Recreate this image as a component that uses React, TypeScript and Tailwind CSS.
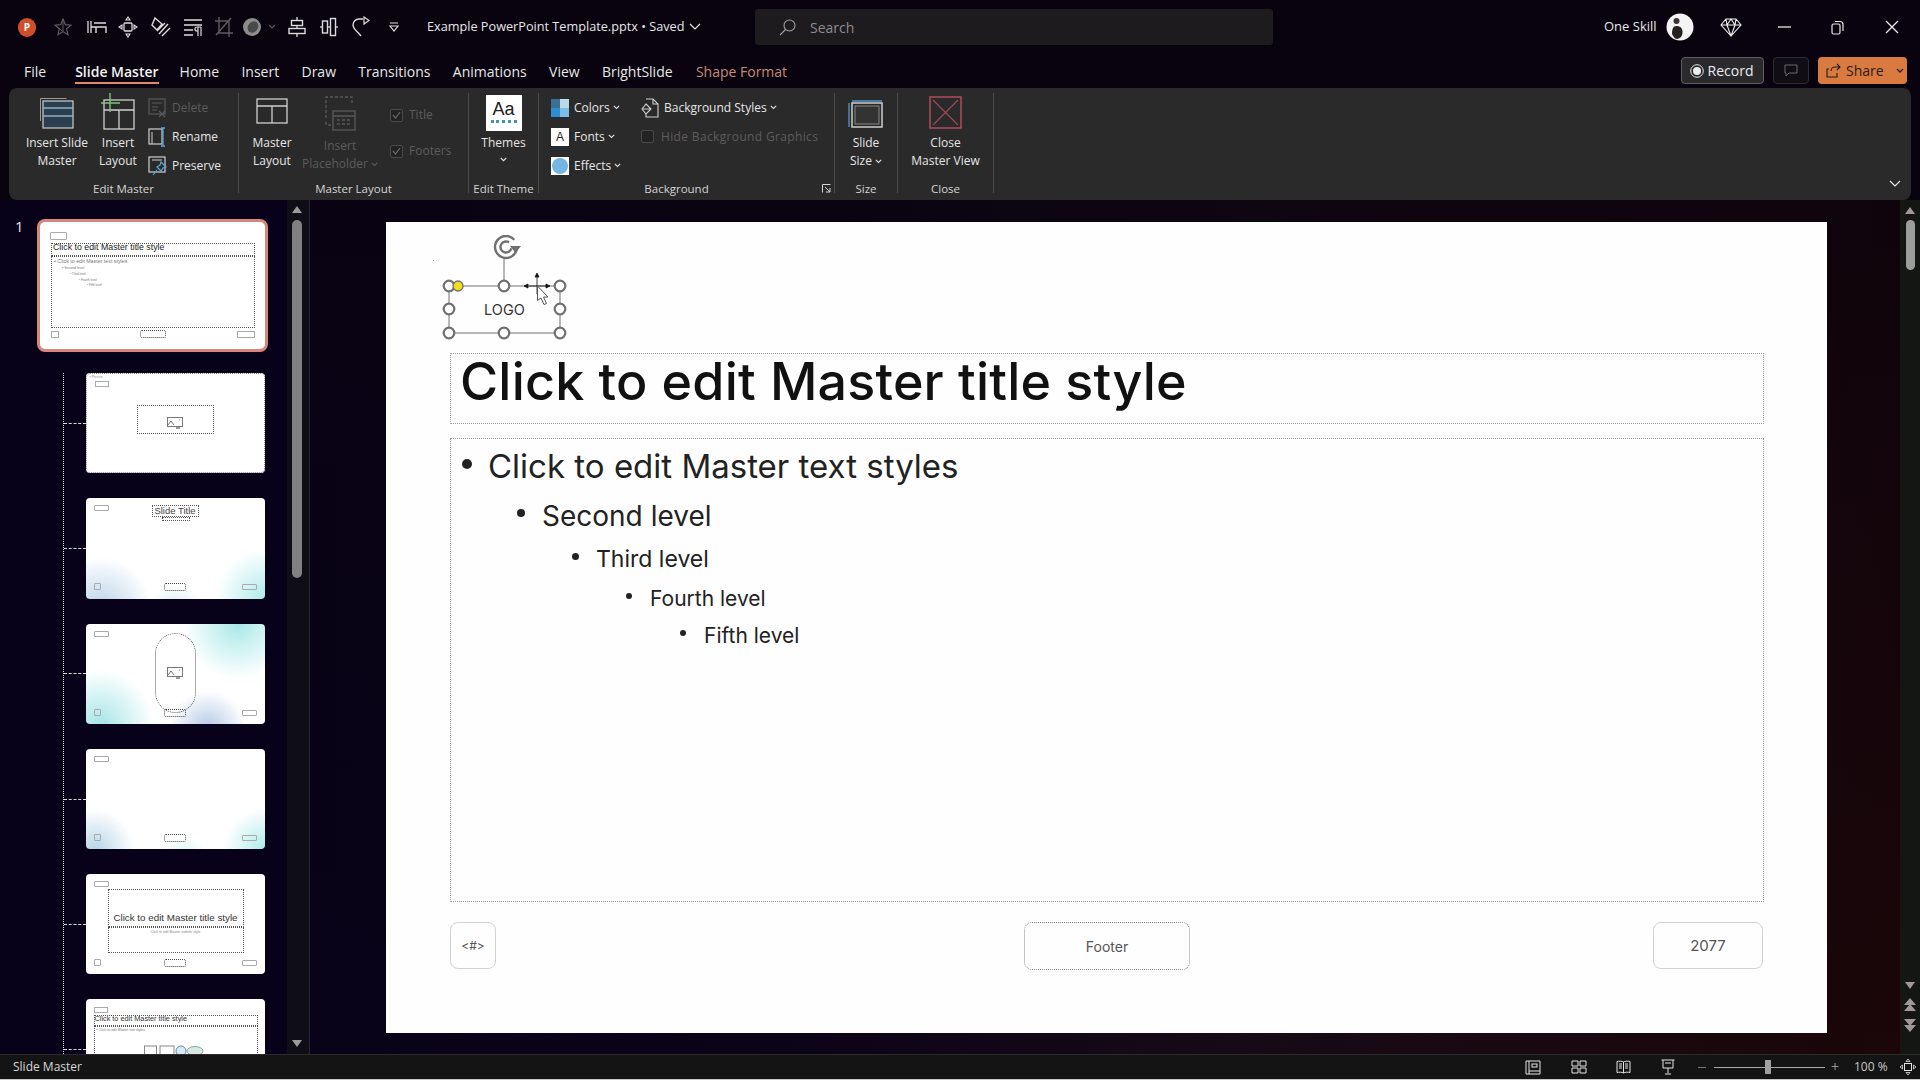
import type { ReactNode } from 'react'

const UI = "font-['Open_Sans','Liberation_Sans',sans-serif]"
const SLIDE_FONT = "font-['Inter','Liberation_Sans',sans-serif]"
const THUMB_FONT = "font-['Liberation_Sans',sans-serif]"

function Svg({ w, h, children, className = '' }: { w: number; h: number; children: ReactNode; className?: string }) {
  return (
    <svg width={w} height={h} viewBox={`0 0 ${w} ${h}`} fill="none" className={`shrink-0 ${className}`}>
      {children}
    </svg>
  )
}

// quick access toolbar
function QatIcons() {
  const c = '#dcdcdc'
  return (
    <div className="flex items-center">
      <Svg w={20} h={20} className="ml-[17px]">
        <path d="M10 2l2.300 5.600 5.700.5-4.400 3.700 1.400 6L10 14.600 4.900 17.800l1.400-6L2 8.100l5.700-.5z" stroke="#5d5a5f" strokeWidth="1.200" />
        <path d="M10 2v12.500M2 8.100l8 6.500" stroke="#5d5a5f" />
      </Svg>
      <Svg w={22} h={20} className="ml-[13px]">
        <path d="M2 4v12M5 4v12" stroke={c} strokeWidth="1.300" />
        <path d="M8 6h12M5 10h15v6M10 10v6" stroke={c} strokeWidth="1.400" />
      </Svg>
      <Svg w={20} h={22} className="ml-[10px]">
        <rect x="6" y="7" width="8" height="8" rx="1" stroke={c} strokeWidth="1.300" />
        <path d="M10 1l2 3H8zM10 21l2-3H8zM1 11l3-2v4zM19 11l-3-2v4z" stroke={c} strokeWidth="1.100" />
      </Svg>
      <Svg w={22} h={22} className="ml-[12px]">
        <path d="M5 2l7 6-5 6-5-5zM7 15l8-8M9 18l9-10M12 20l8-8" stroke={c} strokeWidth="1.400" />
      </Svg>
      <Svg w={20} h={20} className="ml-[11px]">
        <path d="M1 3h18M1 8h18M1 13h9M1 18h9" stroke={c} strokeWidth="1.400" />
        <path d="M15 19v-9M18 19v-9M18 10h-4a2 2 0 000 4h1" stroke={c} strokeWidth="1.200" />
      </Svg>
      <Svg w={20} h={22} className="ml-[11px]">
        <path d="M5 1v16h14M1 5h14v16M2 19L17 2" stroke="#5e5b60" strokeWidth="1.400" />
      </Svg>
      <Svg w={20} h={20} className="ml-[8px]">
        <circle cx="10" cy="10" r="9" fill="#8c8c8c" />
        <ellipse cx="11" cy="10" rx="5" ry="6" transform="rotate(35 11 10)" fill="#4a4a4c" />
      </Svg>
      <Svg w={8} h={6} className="ml-[6px]">
        <path d="M1 1l3 3 3-3" stroke="#5e5b60" strokeWidth="1.100" />
      </Svg>
      <Svg w={18} h={22} className="ml-[12px]">
        <path d="M9 1v20" stroke={c} strokeWidth="1.300" />
        <rect x="3.500" y="4.500" width="11" height="5" stroke={c} strokeWidth="1.400" fill="#08030e" />
        <rect x="1" y="12.500" width="16" height="5" stroke={c} strokeWidth="1.400" fill="#08030e" />
      </Svg>
      <Svg w={20} h={20} className="ml-[13px]">
        <path d="M1 10h18" stroke={c} strokeWidth="1.300" />
        <rect x="3.500" y="4" width="5" height="12" stroke={c} strokeWidth="1.400" fill="#08030e" />
        <rect x="11.500" y="1.500" width="5" height="17" stroke={c} strokeWidth="1.400" fill="#08030e" />
      </Svg>
      <Svg w={20} h={22} className="ml-[12px]">
        <path d="M12 3H8a6 6 0 00-6 6c0 4 5 7 8 11" stroke={c} strokeWidth="1.400" />
        <path d="M13 1v7l5-3.500z" stroke={c} strokeWidth="1.200" />
      </Svg>
      <Svg w={10} h={10} className="ml-[18px]">
        <path d="M1 1h8M1 4h8l-4 5z" stroke={c} strokeWidth="1.200" />
      </Svg>
    </div>
  )
}

function PptLogo() {
  return (
    <div className="ml-[18px] flex h-[19px] w-[18px] items-center justify-center rounded-full bg-[#cf4f2b] text-[10px] font-bold leading-none text-white">
      P
    </div>
  )
}

function TitleBar() {
  return (
    <div className={`flex h-[48px] items-center bg-[#08030e] pt-[6px] ${UI}`}>
      <PptLogo />
      <QatIcons />
      <span className="ml-[28px] w-[253px] whitespace-nowrap text-[12.700px] text-[#e6e6e6]">Example PowerPoint Template.pptx • Saved</span>
      <Svg w={12} h={8} className="ml-[9px]">
        <path d="M1 1l5 5 5-5" stroke="#e6e6e6" strokeWidth="1.200" />
      </Svg>
      <div className="ml-[54px] flex h-[36px] w-[518px] items-center rounded-[3px] bg-[#1d1b1e] pl-[24px]">
        <Svg w={17} h={17}>
          <circle cx="10.500" cy="6.500" r="5.500" stroke="#a0a0a0" strokeWidth="1.100" />
          <path d="M6.500 10.500L1 16" stroke="#a0a0a0" strokeWidth="1.100" />
        </Svg>
        <span className="ml-[14px] text-[14px] text-[#8e8c8e]">Search</span>
      </div>
      <span className="ml-[331px] text-[13px] text-[#e6e6e6]">One Skill</span>
      <Svg w={28} h={28} className="ml-[9px]">
        <circle cx="14" cy="14" r="13.500" fill="#f4f4f4" />
        <circle cx="10.500" cy="8" r="3" fill="#3a3534" />
        <path d="M6 21c0-5 1-8 4.500-8s6 2 6 6-2 6-5 7c-2.500 0-4-2-5.500-5z" fill="#26201f" />
      </Svg>
      <Svg w={22} h={20} className="ml-[26px]">
        <path d="M6 2h10l5 6-10 11L1 8zM1 8h20M7 8l4 11 4-11M6 2l1 6 4-6 4 6 1-6" stroke="#efefef" strokeWidth="1.100" />
      </Svg>
      <Svg w={13} h={2} className="ml-[36px]">
        <path d="M0 1h13" stroke="#e6e6e6" strokeWidth="1.300" />
      </Svg>
      <Svg w={13} h={15} className="ml-[40px]">
        <rect x="1" y="4" width="8" height="10" rx="1.500" stroke="#e6e6e6" strokeWidth="1.200" />
        <path d="M4 1.500h5a3 3 0 013 3V11" stroke="#e6e6e6" strokeWidth="1.200" />
      </Svg>
      <Svg w={14} h={14} className="ml-[41px]">
        <path d="M1 1l12 12M13 1L1 13" stroke="#eeeeee" strokeWidth="1.300" />
      </Svg>
    </div>
  )
}

const TABS = ['Slide Master', 'Home', 'Insert', 'Draw', 'Transitions', 'Animations', 'View', 'BrightSlide']

function TabBar() {
  return (
    <div className={`flex h-[40px] items-start bg-[#08030e] pl-[24px] ${UI}`}>
      <div className="mt-[14px] flex text-[14px] leading-[20px] text-[#e8e8e8]">
        <span className="mr-[29px]">File</span>
        {TABS.map((t, i) => (
          <span key={t} className={i === 0 ? 'mr-[21px] border-b-[2px] border-[#df8a6c] font-semibold text-[#f2f2f2]' : 'mr-[22.300px]'}>
            {t}
          </span>
        ))}
        <span className="ml-[1px] text-[#c98a78]">Shape Format</span>
      </div>
      <div className="mt-[9px] ml-auto flex pr-[13px]">
        <div className="flex h-[27px] w-[83px] items-center justify-center gap-[4px] rounded-[4px] border border-[#5e5e60] bg-[#2a2a2d] pr-[2px] text-[14px] text-[#ececec]">
          <Svg w={14} h={14}>
            <circle cx="7" cy="7" r="6.300" stroke="#e6e6e6" strokeWidth="1" />
            <circle cx="7" cy="7" r="4" fill="#eeeeee" />
          </Svg>
          Record
        </div>
        <div className="ml-[9px] flex h-[27px] w-[36px] items-center justify-center rounded-[4px] border border-[#2c2c2e] bg-[#100d14]">
          <Svg w={14} h={13}>
            <path d="M1 1h12v8H5l-3 3V9H1z" stroke="#6a6a6a" strokeWidth="1" />
          </Svg>
        </div>
        <div className="ml-[9px] flex h-[27px] w-[89px] items-center rounded-[4px] bg-[#d97a41] pl-[8px] text-[14px] text-[#2a1a10]">
          <Svg w={15} h={15}>
            <path d="M11 1l3 3-3 3M14 4H9a4 4 0 00-4 4M3 6H1v8h10v-4" stroke="#2a1a10" strokeWidth="1.100" />
          </Svg>
          <span className="ml-[5px]">Share</span>
          <Svg w={8} h={6} className="ml-[12px]">
            <path d="M1 1l3 3 3-3" stroke="#2a1a10" strokeWidth="1.300" />
          </Svg>
        </div>
      </div>
    </div>
  )
}

function Chevron({ color = '#e0e0e0' }: { color?: string }) {
  return (
    <Svg w={7} h={5} className="ml-[3px]">
      <path d="M.8.8l2.700 2.700L6.200.8" stroke={color} strokeWidth="1.100" />
    </Svg>
  )
}

function BigButton({ icon, lines, className = '', disabled }: { icon: ReactNode; lines: ReactNode[]; className?: string; disabled?: boolean }) {
  return (
    <div className={`flex flex-col items-center text-[12px] leading-[18px] ${disabled ? 'text-[#5c5c5c]' : 'text-[#e6e6e6]'} ${className}`}>
      <div className="flex h-[41px] items-start justify-center">{icon}</div>
      {lines.map((l, i) => (
        <div key={i} className="flex items-center whitespace-nowrap">
          {l}
        </div>
      ))}
    </div>
  )
}

function SmallRow({ icon, label, disabled, chevron }: { icon: ReactNode; label: string; disabled?: boolean; chevron?: boolean }) {
  return (
    <div className={`flex h-[29px] items-center whitespace-nowrap text-[12px] ${disabled ? 'text-[#5c5c5c]' : 'text-[#e6e6e6]'}`}>
      {icon}
      <span className="ml-[5px]">{label}</span>
      {chevron && <Chevron />}
    </div>
  )
}

function Check({ on = true }: { on?: boolean }) {
  return (
    <div className="flex h-[13px] w-[13px] shrink-0 items-center justify-center rounded-[2px] border border-[#4a4a4a] bg-[#222222]">
      {on && (
        <Svg w={9} h={8}>
          <path d="M1 4l2.500 3L8 1" stroke="#6a6a6a" strokeWidth="1.200" />
        </Svg>
      )}
    </div>
  )
}

function Group({ label, width, children, className = '', labelClass = '' }: { label: string; width: string; children: ReactNode; className?: string; labelClass?: string }) {
  return (
    <div className={`flex h-[100px] shrink-0 flex-col border-r border-[#4a4a4a] ${width}`}>
      <div className={`flex h-[88px] shrink-0 items-start ${className}`}>{children}</div>
      <div className={`shrink-0 text-center text-[11.500px] leading-[16px] text-[#d4d4d4] ${labelClass}`}>{label}</div>
    </div>
  )
}

function Ribbon() {
  const s = '#cfcfcf'
  const d = '#5a5a5a'
  return (
    <div className={`relative ml-[9px] flex h-[112px] w-[1902px] rounded-[8px] bg-[#2a2a2a] pt-[5px] ${UI}`}>
      <Group label="Edit Master" width="w-[230px]" className="pl-[13px]">
        <BigButton
          className="w-[70px]"
          lines={['Insert Slide', 'Master']}
          icon={
            <Svg w={34} h={32} className="mt-[4px]">
              <path d="M.5 24V1.500h26" stroke="#9a9a9a" />
              <rect x="3" y="4" width="30" height="27" stroke={s} fill="#2c3f50" strokeWidth="1.200" />
              <path d="M3 11h30M3 19h30" stroke="#8fb0c8" strokeWidth="1.400" />
            </Svg>
          }
        />
        <BigButton
          className="w-[52px]"
          lines={['Insert', 'Layout']}
          icon={
            <Svg w={34} h={38}>
              <rect x="3" y="7" width="30" height="29" stroke={s} strokeWidth="1.300" />
              <path d="M3 17h30M18 17v19" stroke={s} strokeWidth="1.300" />
              <path d="M9 0v19M0 10h19" stroke="#7fc47a" strokeWidth="1.400" />
            </Svg>
          }
        />
        <div className="ml-[4px] flex flex-col">
          <SmallRow
            disabled
            label="Delete"
            icon={
              <Svg w={19} h={20}>
                <rect x="1" y="1" width="16" height="15" stroke={d} strokeWidth="1.200" />
                <path d="M4 5h10M4 9h6M4 12h5M11 13l6 6M17 13l-6 6" stroke={d} strokeWidth="1.200" />
              </Svg>
            }
          />
          <SmallRow
            label="Rename"
            icon={
              <Svg w={19} h={20}>
                <rect x="1" y="2" width="13" height="15" stroke={s} strokeWidth="1.200" />
                <path d="M4 5v12" stroke={s} />
                <path d="M15 1v18M13 1h4M13 19h4" stroke="#5aa7d8" strokeWidth="1.300" />
              </Svg>
            }
          />
          <SmallRow
            label="Preserve"
            icon={
              <Svg w={19} h={20}>
                <rect x="1" y="1" width="16" height="15" stroke={s} strokeWidth="1.200" />
                <path d="M4 4h10" stroke={s} />
                <path d="M13 6l5 5-3 1-2 3-4-4 3-2zM9 14l-4 5" stroke="#5aa7d8" strokeWidth="1.200" />
              </Svg>
            }
          />
        </div>
      </Group>

      <Group label="Master Layout" width="w-[230px]" className="pl-[1px]">
        <BigButton
          className="w-[64px]"
          lines={['Master', 'Layout']}
          icon={
            <Svg w={32} h={26} className="mt-[5px]">
              <rect x="1" y="1" width="30" height="24" stroke={s} strokeWidth="1.300" />
              <path d="M1 8h30M16 8v17" stroke={s} strokeWidth="1.300" />
            </Svg>
          }
        />
        <BigButton
          disabled
          className="w-[72px] pt-[3px]"
          lines={[
            'Insert',
            <>
              Placeholder
              <Chevron color="#5c5c5c" />
            </>,
          ]}
          icon={
            <Svg w={32} h={38}>
              <path d="M2 22V1h26v8M2 26v3h7" stroke={d} strokeWidth="1.300" strokeDasharray="3 2" />
              <rect x="9" y="15" width="22" height="19" stroke={d} strokeWidth="1.300" />
              <path d="M9 20h22M13 24h3M18 24h3M23 24h3M13 28h3M18 28h3M23 28h3" stroke={d} strokeWidth="1.600" />
            </Svg>
          }
        />
        <div className="ml-[14px] mt-[15px] flex flex-col gap-[22px] text-[12px] text-[#5c5c5c]">
          <div className="flex h-[14px] items-center gap-[6px]">
            <Check />
            Title
          </div>
          <div className="flex h-[14px] items-center gap-[6px]">
            <Check />
            Footers
          </div>
        </div>
      </Group>

      <Group label="Edit Theme" width="w-[70px]" className="justify-center">
        <BigButton
          lines={[
            'Themes',
            <Svg w={7} h={14} className="mt-[2px]">
              <path d="M.8 4l2.700 2.700L6.200 4" stroke="#e0e0e0" strokeWidth="1.100" />
            </Svg>,
          ]}
          icon={
            <div className={`mt-[2px] flex h-[36px] w-[36px] flex-col items-center bg-white pt-[5px] text-[18px] leading-[19px] text-[#222222] ${THUMB_FONT}`}>
              Aa
              <div className="mt-[1px] h-[3px] w-[26px] border-t-[3px] border-dotted border-[#3f97a8]" />
            </div>
          }
        />
      </Group>

      <Group label="Background" width="w-[296px]" className="pl-[12px]" labelClass="pr-[20px]">
        <div className="flex w-[90px] flex-col">
          <SmallRow
            chevron
            label="Colors"
            icon={
              <div className="grid h-[18px] w-[18px] grid-cols-2 grid-rows-2">
                <div className="bg-[#3c6f94]" />
                <div className="bg-[#bcd7ea]" />
                <div className="bg-[#2d8fd0]" />
                <div className="bg-[#7dbde6]" />
              </div>
            }
          />
          <SmallRow
            chevron
            label="Fonts"
            icon={<div className={`flex h-[18px] w-[18px] items-center justify-center bg-white text-[12px] leading-none text-[#222222] ${THUMB_FONT}`}>A</div>}
          />
          <SmallRow
            chevron
            label="Effects"
            icon={
              <div className="flex h-[18px] w-[18px] items-center justify-center bg-white">
                <div className="h-[16px] w-[16px] rounded-full bg-[#74b5e4]" />
              </div>
            }
          />
        </div>
        <div className="flex flex-col">
          <SmallRow
            chevron
            label="Background Styles"
            icon={
              <Svg w={18} h={20}>
                <path d="M5 1h7l5 5v13H5v-3M12 1v5h5" stroke={s} strokeWidth="1.100" />
                <path d="M5 6l5 5-5 5-4-5zM2 11h8" stroke={s} strokeWidth="1.100" />
              </Svg>
            }
          />
          <div className="flex h-[29px] items-center gap-[7px] whitespace-nowrap text-[12px] tracking-[.35px] text-[#5c5c5c]">
            <Check on={false} />
            Hide Background Graphics
          </div>
        </div>
      </Group>

      <Group label="Size" width="w-[63px]" className="justify-center">
        <BigButton
          lines={[
            'Slide',
            <>
              Size
              <Chevron />
            </>,
          ]}
          icon={
            <Svg w={36} h={30} className="mt-[6px]">
              <path d="M1 4v24M4 2h30" stroke="#4f9ac8" strokeWidth="1.300" />
              <rect x="4" y="4" width="30" height="24" stroke={s} strokeWidth="1.500" />
              <rect x="7" y="7" width="24" height="18" stroke="#8a8a8a" fill="#333333" />
            </Svg>
          }
        />
      </Group>

      <Group label="Close" width="w-[96px]" className="justify-center">
        <BigButton
          lines={['Close', 'Master View']}
          icon={
            <Svg w={33} h={33} className="mt-[3px]">
              <rect x="1" y="1" width="31" height="31" stroke="#ad4d5f" strokeWidth="1.500" />
              <path d="M4 4l25 25M29 4L4 29" stroke="#a14a58" strokeWidth="1.100" />
            </Svg>
          }
        />
      </Group>

      <Svg w={12} h={8} className="absolute bottom-[12px] right-[10px]">
        <path d="M1 1l5 5 5-5" stroke="#e6e6e6" strokeWidth="1.200" />
      </Svg>
      <Svg w={9} h={9} className="absolute bottom-[7px] left-[813px]">
        <path d="M.5 8.500v-8h8M3 3l5 5M8 4v4H4" stroke="#d4d4d4" />
      </Svg>
    </div>
  )
}

function ImageGlyph() {
  return (
    <Svg w={16} h={12}>
      <rect x=".5" y=".5" width="15" height="9" stroke="#777777" fill="#ffffff" />
      <path d="M1 8l3-4 3 4M12 3h1" stroke="#777777" />
      <path d="M9 11h4" stroke="#777777" strokeWidth="1.500" />
    </Svg>
  )
}

function MiniFooter({ mid = true }: { mid?: boolean }) {
  return (
    <>
      <div className="absolute left-[8.500px] top-[7px] h-[6px] w-[14.500px] rounded-[1px] border-[0.500px] border-[#aaaaaa]" />
      <div className="absolute left-[8.500px] top-[85px] h-[7px] w-[6.500px] rounded-[1px] border-[0.500px] border-[#aaaaaa]" />
      {mid && <div className="absolute left-[78.500px] top-[85px] h-[8px] w-[22px] rounded-[2px] border-[1px] border-dotted border-[#444444]" />}
      <div className="absolute left-[156.500px] top-[86px] h-[6px] w-[14.500px] rounded-[1px] border-[0.500px] border-[#aaaaaa]" />
    </>
  )
}

function Thumb({ children, className = '' }: { children?: ReactNode; className?: string }) {
  return (
    <div className="flex h-[100.300px] shrink-0 items-center">
      <div className="h-0 w-[21.500px] border-t border-dashed border-[#d8d8d8]" />
      <div className={`relative h-[100.300px] w-[179px] overflow-hidden rounded-[4px] bg-white ${THUMB_FONT} ${className}`}>{children}</div>
    </div>
  )
}

function ThumbnailPane() {
  return (
    <div className="relative flex h-full w-[310px] shrink-0 border-r border-[#2a2834] bg-[#07021a]">
      <div className={`w-[37px] pl-[15px] pt-[15px] text-[15px] leading-[22px] text-[#e8e8e8] ${UI}`}>1</div>
      <div className="w-[250px] overflow-hidden">
        <div className={`relative mt-[19px] h-[133px] w-[231px] rounded-[8px] border-[3px] border-[#d8857c] bg-white ${THUMB_FONT}`}>
          <div className="absolute left-[10px] top-[10px] h-[8px] w-[17px] rounded-[1px] border-[0.500px] border-[#aaaaaa]" />
          <div className="absolute left-[11px] top-[21px] h-[13px] w-[204px] border border-dotted border-[#555555] pl-[1px] text-[8.800px] font-medium leading-[7px] text-[#222222]">Click to edit Master title style</div>
          <div className="absolute left-[11px] top-[34px] h-[72px] w-[204px] border border-dotted border-[#555555] text-[#777777]">
            <div className="pl-[2px] pt-[1px] text-[5.300px] leading-[7px]">• Click to edit Master text styles</div>
            <div className="pl-[10px] pt-[1px] text-[3.500px] leading-[5px]">• Second level</div>
            <div className="pl-[18px] text-[3px] leading-[6px]">• Third level</div>
            <div className="pl-[27px] text-[3px] leading-[6px]">• Fourth level</div>
            <div className="pl-[35px] text-[3px] leading-[5px]">• Fifth level</div>
          </div>
          <div className="absolute left-[11px] top-[109px] h-[7px] w-[8px] border-[0.500px] border-[#aaaaaa]" />
          <div className="absolute left-[100px] top-[108px] h-[8px] w-[26px] rounded-[2px] border border-dotted border-[#444444]" />
          <div className="absolute left-[197px] top-[109px] h-[7px] w-[18px] border-[0.500px] border-[#aaaaaa]" />
        </div>

        <div className="ml-[26px] mt-[21px] flex flex-col gap-[25px] border-l border-dotted border-[#d8d8d8]">
          <Thumb>
            <div className="absolute inset-0 rounded-[4px] border border-dotted border-[#888888]" />
            <div className="absolute left-[4px] top-[2px] text-[3.500px] leading-[4px] text-[#888888]">• Picture</div>
            <div className="absolute left-[9px] top-[8px] h-[6px] w-[14px] border-[0.500px] border-[#aaaaaa]" />
            <div className="absolute left-[51px] top-[32px] flex h-[29px] w-[77px] items-center justify-center rounded-[1px] border border-dotted border-[#555555] pt-[7px]">
              <ImageGlyph />
            </div>
          </Thumb>
          <Thumb className="bg-[radial-gradient(circle_at_8%_110%,#b9d2e8_0,#ffffff00_26%),radial-gradient(circle_at_100%_100%,#aeeaea_0,#ffffff00_24%),radial-gradient(circle_at_50%_115%,#d0eaf0_0,#ffffff00_20%)]">
            <MiniFooter />
            <div className="absolute left-[66px] top-[7px] h-[12px] w-[47px] border border-dotted border-[#555555] text-center text-[9.500px] leading-[9px] text-[#444444]">Slide Title</div>
            <div className="absolute left-[76px] top-[19px] h-[4px] w-[28px] border border-dotted border-[#555555]" />
          </Thumb>
          <Thumb className="bg-[radial-gradient(circle_at_85%_0%,#a8e8e8_0,#ffffff00_30%),radial-gradient(circle_at_8%_100%,#a8e6e8_0,#ffffff00_28%),radial-gradient(circle_at_68%_105%,#b4c8e6_0,#ffffff00_24%)]">
            <MiniFooter />
            <div className="absolute left-[69px] top-[9px] flex h-[80px] w-[41px] items-center justify-center rounded-[21px] border border-dotted border-[#555555]">
              <ImageGlyph />
            </div>
          </Thumb>
          <Thumb className="bg-[radial-gradient(circle_at_5%_100%,#b8d6e8_0,#ffffff00_20%),radial-gradient(circle_at_100%_100%,#aeeaea_0,#ffffff00_20%),radial-gradient(circle_at_55%_115%,#cdeef0_0,#ffffff00_18%)]">
            <MiniFooter />
          </Thumb>
          <Thumb>
            <MiniFooter />
            <div className="absolute left-[22px] top-[15px] h-[38px] w-[136px] border border-dotted border-[#555555] pt-[22px] text-center text-[9.800px] font-medium leading-[11px] text-[#333333]">Click to edit Master title style</div>
            <div className="absolute left-[22px] top-[53px] h-[26px] w-[136px] border border-dotted border-[#555555] pt-[1px] text-center text-[3.500px] leading-[6px] text-[#888888]">Click to edit Master subtitle style</div>
          </Thumb>
          <Thumb>
            <div className="absolute left-[8.500px] top-[8px] h-[6px] w-[14px] border-[0.500px] border-[#aaaaaa]" />
            <div className="absolute left-[8px] top-[16px] h-[11px] w-[164px] border border-dotted border-[#555555] text-[7.300px] leading-[6px] text-[#333333]">Click to edit Master title style</div>
            <div className="absolute left-[8px] top-[27px] h-[73px] w-[164px] border border-dotted border-[#555555] pl-[2px] text-[3.500px] leading-[6px] text-[#777777]">
              • Click to edit Master text styles
            </div>
            <div className="absolute left-[58px] top-[45px]">
              <Svg w={62} h={12}>
                <rect x=".5" y="2" width="12" height="9" stroke="#888888" fill="#ffffff" />
                <rect x="16" y="2" width="14" height="9" stroke="#888888" fill="#ffffff" />
                <ellipse cx="37" cy="7" rx="5" ry="5" stroke="#5d8fb0" fill="#dbe9f2" />
                <ellipse cx="51" cy="7" rx="8" ry="4.500" stroke="#8aa79a" fill="#dbe8e2" />
              </Svg>
            </div>
          </Thumb>
        </div>
      </div>

      <div className="absolute right-0 top-0 flex h-full w-[22px] flex-col items-center bg-[#0f0d16] pr-[3px] pt-[6px]">
        <Svg w={10} h={7}>
          <path d="M5 0l5 7H0z" fill="#9a9a9a" />
        </Svg>
        <div className="mt-[7px] h-[358px] w-[10px] rounded-[5px] bg-[#808080]" />
        <Svg w={10} h={7} className="mt-auto mb-[7px]">
          <path d="M5 7L0 0h10z" fill="#9a9a9a" />
        </Svg>
      </div>
    </div>
  )
}

function Selection() {
  const g = '#707070'
  const pts = [
    [9, 51],
    [64, 51],
    [120, 51],
    [9, 74],
    [120, 74],
    [9, 98],
    [64, 98],
    [120, 98],
  ]
  return (
    <div className="absolute left-[54px] top-[13px] h-[110px] w-[130px]">
      <svg width="130" height="110" viewBox="0 0 130 110" fill="none">
        <rect x="9" y="51" width="111" height="47" stroke={g} />
        <path d="M64 24v27" stroke={g} />
        <circle cx="66" cy="12" r="11" stroke={g} strokeWidth="2.400" strokeDasharray="58 11" transform="rotate(15 66 12)" />
        <circle cx="66" cy="12" r="5.500" stroke={g} strokeWidth="2.400" strokeDasharray="27 8" transform="rotate(15 66 12)" />
        <path d="M70 11h11l-5.500 7z" fill={g} />
        {pts.map(([x, y]) => (
          <circle key={`${x}-${y}`} cx={x} cy={y} r="5.300" fill="#ffffff" stroke={g} strokeWidth="2.200" />
        ))}
        <circle cx="18" cy="51" r="5" fill="#f2dc1c" stroke={g} strokeWidth="1.300" />
        <path d="M97 42v17M88.500 51H106M97 38l-2 4h4zM84 51l4-2v4zM110 51l-4-2v4z" stroke="#111111" fill="#111111" strokeWidth=".8" />
        <path d="M97.500 51v14.500l3.500-2.500 3 6.500 2.500-1-3-6.500h4.500z" fill="#ffffff" stroke="#555555" />
      </svg>
      <div className="absolute left-[44px] top-[64px] w-[40px] text-center text-[14.500px] leading-[22px] text-[#333333]">LOGO</div>
    </div>
  )
}

function Dot({ size }: { size: string }) {
  return (
    <span className="flex w-[26px] shrink-0 justify-center pr-[16px]">
      <span className={`mb-[6px] shrink-0 rounded-full bg-[#222222] ${size}`} />
    </span>
  )
}

function Slide() {
  return (
    <div className={`relative h-[811px] w-[1441px] shrink-0 bg-[#fefefe] pl-[64px] pr-[63px] pt-[131px] ${SLIDE_FONT}`}>
      <div className="absolute left-[47px] top-[38px] h-px w-px bg-[#999999]" />
      <Selection />
      <div className="h-[71px] border border-dotted border-[#9a9a9a] pl-[9px] text-[52px] font-medium leading-[56px] tracking-[.2px] text-[#111111]">Click to edit Master title style</div>
      <div className="mt-[14px] h-[464px] border border-dotted border-[#9a9a9a] pl-[11px] pt-[7px] text-[#222222]">
        <div className="flex h-[41px] items-center text-[33px]">
          <Dot size="h-[10px] w-[10px]" />
          Click to edit Master text styles
        </div>
        <div className="flex h-[50px] items-center pl-[54px] pt-[8px] text-[28px]">
          <Dot size="h-[8px] w-[8px]" />
          Second level
        </div>
        <div className="flex h-[43px] items-center pl-[108px] pt-[2px] text-[23px]">
          <Dot size="h-[7px] w-[7px]" />
          Third level
        </div>
        <div className="flex h-[37px] items-center pl-[162px] text-[21px]">
          <Dot size="h-[6px] w-[6px]" />
          Fourth level
        </div>
        <div className="flex h-[37px] items-center pl-[216px] text-[21px]">
          <Dot size="h-[6px] w-[6px]" />
          Fifth level
        </div>
      </div>
      <div className="mt-[20px] flex h-[48px] text-[15px] text-[#555555]">
        <div className="flex h-[47px] w-[46px] items-center justify-center rounded-[8px] border border-[#d2d2d2] pt-[1px] text-[12px]">&lt;#&gt;</div>
        <div className="ml-[528px] flex h-[48px] w-[166px] items-center justify-center rounded-[8px] border border-dotted border-[#8a8a8a] text-[14px]">Footer</div>
        <div className="ml-auto mr-px flex h-[47px] w-[110px] items-center justify-center rounded-[8px] border border-[#d2d2d2] pt-[2px]">2077</div>
      </div>
    </div>
  )
}

function RightScroll() {
  const c = '#a09898'
  return (
    <div className="flex h-full w-[20px] shrink-0 flex-col items-center bg-[#141614] pt-[7px]">
      <Svg w={10} h={7}>
        <path d="M5 0l5 7H0z" fill={c} />
      </Svg>
      <div className="mt-[6px] h-[50px] w-[9px] rounded-[4.500px] bg-[#9c9c9c]" />
      <Svg w={10} h={7} className="mt-auto">
        <path d="M5 7L0 0h10z" fill={c} />
      </Svg>
      <Svg w={12} h={14} className="mt-[9px]">
        <path d="M6 0l6 7H0zM6 6l6 7H0z" fill={c} />
      </Svg>
      <Svg w={12} h={14} className="mb-[22px] mt-[6px]">
        <path d="M6 14L0 7h12zM6 8L0 1h12z" fill={c} />
      </Svg>
    </div>
  )
}

function StatusBar() {
  const c = '#e4e4e4'
  return (
    <div className={`flex h-[26px] items-center border-t border-b border-t-[#2b2b2b] border-b-[#c8c8c8] bg-[#141414] pl-[13px] text-[12px] text-[#d8d8d8] ${UI}`}>
      <span>Slide Master</span>
      <Svg w={16} h={15} className="ml-[1443px]">
        <path d="M1 1h14v13H1zM4 1v13M4 11h11" stroke={c} />
        <rect x="7" y="4" width="5" height="3" stroke={c} />
      </Svg>
      <Svg w={16} h={14} className="ml-[30px]">
        <path d="M1 1h6v5H1zM9 1h6v5H9zM1 8h6v5H1zM9 8h6v5H9z" stroke={c} />
      </Svg>
      <Svg w={15} h={14} className="ml-[29px]">
        <path d="M7.500 2C6 1 3 1 1 1.500v11c2-.5 5-.5 6.500.5 1.500-1 4.500-1 6.500-.5v-11C12 1 9 1 7.500 2zM7.500 2v11M3 4h3M3 6h3M3 8h3M9 4h3M9 6h3M9 8h3" stroke={c} />
      </Svg>
      <Svg w={14} h={16} className="ml-[30px]">
        <path d="M.5 1h13M2 1v8h10V1M7 9v5M4 15h6M4 4h6" stroke={c} />
      </Svg>
      <div className="ml-[23px] h-px w-[8px] bg-[#777777]" />
      <div className="relative ml-[8px] flex h-[14px] w-[111px] items-center">
        <div className="h-px w-full bg-[#a8a8a8]" />
        <div className="absolute left-[51px] top-0 h-[14px] w-[6px] bg-[#a0a0a0]" />
      </div>
      <span className="ml-[6px] text-[14px] leading-none text-[#999999]">+</span>
      <span className="ml-[15px] text-[12px] text-[#c8c8c8]">100 %</span>
      <Svg w={16} h={16} className="ml-[12px]">
        <rect x="4.500" y="4.500" width="7" height="7" stroke={c} />
        <path d="M8 0l2 2.500H6zM8 16l2-2.500H6zM0 8l2.500-2v4zM16 8l-2.500-2v4z" stroke={c} strokeWidth=".8" />
      </Svg>
    </div>
  )
}

export default function App() {
  return (
    <div className="flex h-[1080px] w-[1920px] flex-col overflow-hidden bg-[#08030e]">
      <TitleBar />
      <TabBar />
      <Ribbon />
      <div className="flex h-[854px] bg-[linear-gradient(180deg,#08030e99_0%,#08030e44_60%,#08030e00_100%),linear-gradient(90deg,#07021a_0%,#0b0318_40%,#170a16_65%,#1b0608_100%)]">
        <ThumbnailPane />
        <div className="flex flex-1 pl-[76px] pt-[22px]">
          <Slide />
        </div>
        <RightScroll />
      </div>
      <StatusBar />
    </div>
  )
}
